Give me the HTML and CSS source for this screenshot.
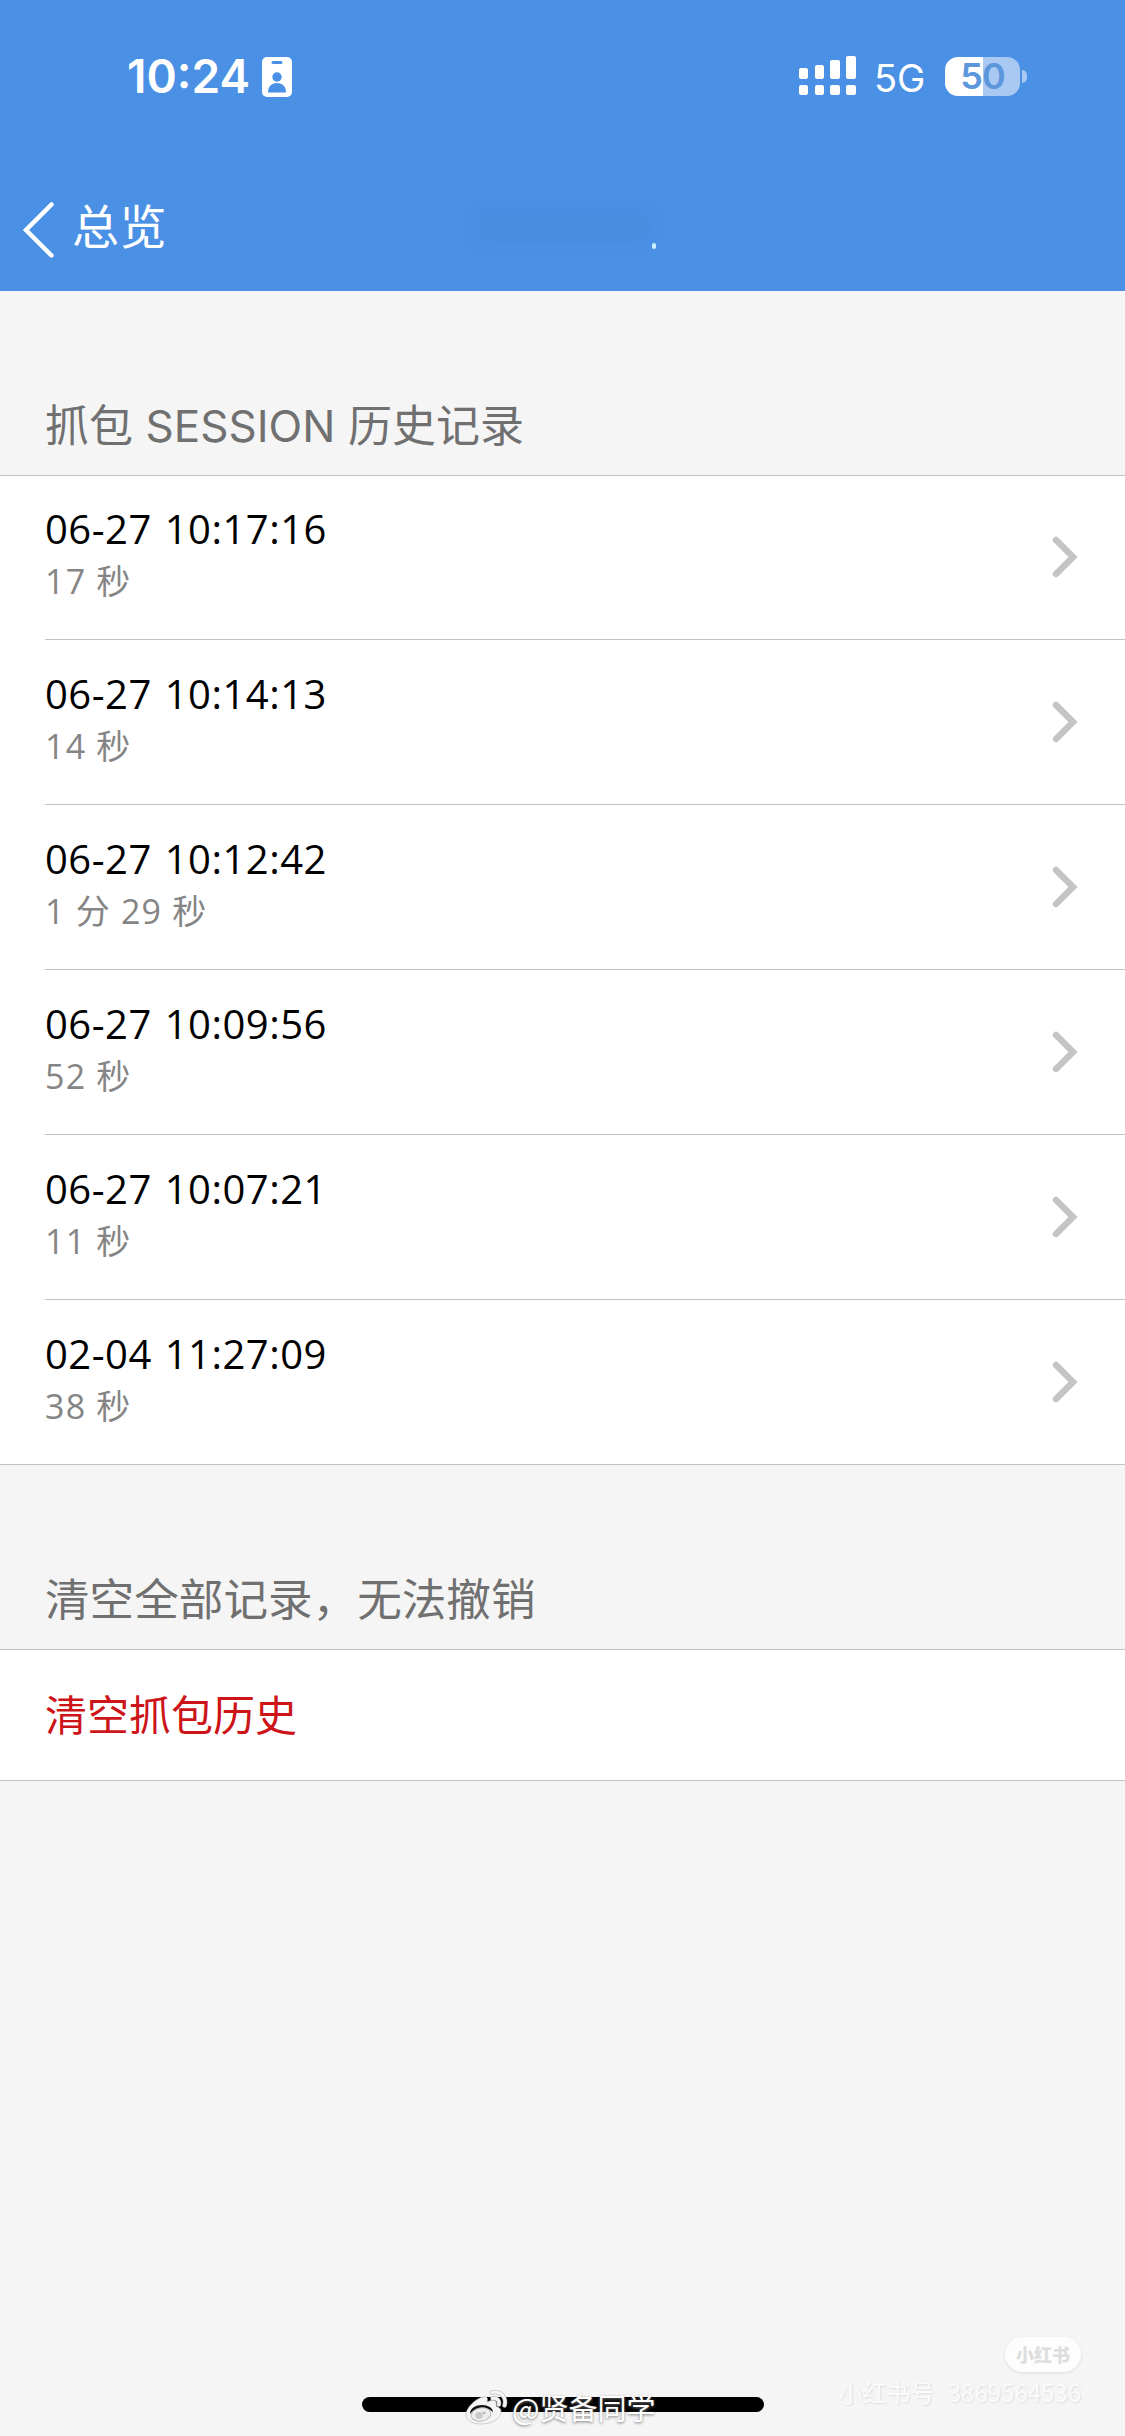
FILE: index.html
```html
<!DOCTYPE html>
<html lang="zh-CN">
<head>
<meta charset="utf-8">
<title>抓包历史</title>
<link rel="stylesheet" href="styles.css">
</head>
<body>
<div class="screen">
  <header class="top">
    <div class="status">
      <span class="time">10:24</span>
      <svg class="badge" width="30" height="40" viewBox="0 0 30 40">
        <rect width="30" height="40" rx="5" fill="#fff"/>
        <rect x="9.500" y="4" width="11" height="3" rx="1.500" fill="#4a90e5"/>
        <circle cx="15" cy="20" r="4.700" fill="#4a90e5"/>
        <path d="M6 35.500c0-6 3.500-9.500 9-9.500s9 3.500 9 9.500z" fill="#4a90e5"/>
      </svg>
      <svg class="signal" width="57" height="40" viewBox="0 0 57 40" fill="#fff">
        <rect x="0" y="12" width="9" height="11" rx="2"/><rect x="16" y="9" width="9" height="14" rx="2"/>
        <rect x="31" y="4" width="10" height="19" rx="2"/><rect x="47" y="0" width="10" height="23" rx="2"/>
        <rect x="0" y="29" width="9" height="10" rx="2"/><rect x="16" y="29" width="9" height="10" rx="2"/>
        <rect x="31" y="29" width="10" height="10" rx="2"/><rect x="47" y="29" width="10" height="10" rx="2"/>
      </svg>
      <span class="network">5G</span>
      <div class="battery"><span class="level">50</span></div>
      <span class="nub"></span>
    </div>
    <nav class="nav">
      <svg class="back" width="34" height="60" viewBox="0 0 34 60"><path d="M30.500 4.500L5 30l25.500 25.500" fill="none" stroke="#fff" stroke-width="4.500" stroke-linecap="round"/></svg>
      <span class="back-label">总览</span>
      <span class="title"></span>
      <span class="dot"></span>
    </nav>
  </header>
  <h2 class="caption mixed">抓包 SESSION 历史记录</h2>
  <ul class="list">
    <li class="row"><div><p class="date">06-27 10:17:16</p><p class="length">17 秒</p></div><svg class="more" width="26" height="42" viewBox="0 0 26 42"><path d="M4 4l17 17L4 38"/></svg></li>
    <li class="row"><div><p class="date">06-27 10:14:13</p><p class="length">14 秒</p></div><svg class="more" width="26" height="42" viewBox="0 0 26 42"><path d="M4 4l17 17L4 38"/></svg></li>
    <li class="row"><div><p class="date">06-27 10:12:42</p><p class="length">1 分 29 秒</p></div><svg class="more" width="26" height="42" viewBox="0 0 26 42"><path d="M4 4l17 17L4 38"/></svg></li>
    <li class="row"><div><p class="date">06-27 10:09:56</p><p class="length">52 秒</p></div><svg class="more" width="26" height="42" viewBox="0 0 26 42"><path d="M4 4l17 17L4 38"/></svg></li>
    <li class="row"><div><p class="date">06-27 10:07:21</p><p class="length">11 秒</p></div><svg class="more" width="26" height="42" viewBox="0 0 26 42"><path d="M4 4l17 17L4 38"/></svg></li>
    <li class="row"><div><p class="date">02-04 11:27:09</p><p class="length">38 秒</p></div><svg class="more" width="26" height="42" viewBox="0 0 26 42"><path d="M4 4l17 17L4 38"/></svg></li>
  </ul>
  <h2 class="caption">清空全部记录，无法撤销</h2>
  <div class="clear">清空抓包历史</div>
  <div class="home"></div>

  <div class="weibo">
    <svg width="43" height="36" viewBox="0 0 43 36">
      <path d="M18 8C10 10 1 19 1 26c0 5 6 9 15 9 11 0 20-6 20-12 0-4-3-5-5-6 1-4 0-8-9-4 1-4 0-6-4-5z" fill="#f5f5f5" stroke="#c4c4c4" stroke-width=".8"/>
      <path d="M5 25c0-6 6-9 12-9s11 3 11 7c-3-3-7-4-12-3.500S7 22 5 25z" fill="#111"/>
      <ellipse cx="16" cy="25.500" rx="10" ry="6.500" fill="#eee" stroke="#bbb" transform="rotate(-10 16 25.500)"/>
      <circle cx="14" cy="26.500" r="3.600" fill="#c9c9c9"/><circle cx="19" cy="24" r="1.600" fill="#bbb"/>
      <path d="M27 3.500c9-2 15 5 12.500 13M27.500 9.500c4-1 7.500 2 6.300 6" fill="none" stroke="#bbb" stroke-width="4.400" stroke-linecap="round"/>
      <path d="M27 3.500c9-2 15 5 12.500 13M27.500 9.500c4-1 7.500 2 6.300 6" fill="none" stroke="#f5f5f5" stroke-width="3" stroke-linecap="round"/>
    </svg>
    <span>@贤备同学</span>
  </div>
  <div class="red">
    <span class="pill">小红书</span>
    <span class="account">小红书号 3869564536</span>
  </div>
</div>
</body>
</html>
```
FILE: styles.css
```css
* { box-sizing: border-box; margin: 0; padding: 0; }
body { background: #f5f5f5; font-family: Inter, "Noto Sans CJK SC", sans-serif; }
.screen { position: relative; width: 1125px; height: 2436px; display: flex; flex-direction: column; background: #f5f5f5; overflow: hidden; }
.top { height: 291px; background: #4a90e5; color: #fff; flex: none; }
.status { height: 152px; display: flex; align-items: center; padding-left: 127px; }
.time { width: 135px; font-size: 46px; font-weight: 600; white-space: nowrap; }
.badge { margin-top: 2px; }
.signal { margin-left: 507px; }
.network { width: 69px; margin-left: 18px; margin-right: 2px; margin-top: 4px; font-size: 38px; white-space: nowrap; }
.battery { width: 75px; height: 39px; border-radius: 13px; background: linear-gradient(90deg, #fff 38px, #a9c9f2 38px); display: flex; align-items: center; justify-content: center; }
.level { font-size: 36px; font-weight: 600; line-height: 39px; letter-spacing: -1px; color: #5c97dc; }
.nub { width: 5px; height: 13px; margin-left: 2px; border-radius: 0 6px 6px 0; background: #a9c9f2; }
.nav { height: 139px; padding: 0 0 0 21px; display: flex; align-items: flex-start; }
.back { margin-top: 48px; }
.back-label { width: 403px; margin: 37px 0 0 17px; font: 400 47px/70px "Noto Sans CJK SC", sans-serif; letter-spacing: .5px; }
.title { width: 176px; height: 34px; margin-top: 58px; background: #4586d6; opacity: .4; filter: blur(7px); }
.dot { width: 4px; height: 6px; margin-top: 91px; margin-left: 1px; border-radius: 2px; background: #d4f4ff; }
.caption { height: 184px; padding: 102px 0 0 45px; flex: none; font: 400 44.6px/66px Inter, "Noto Sans CJK SC", sans-serif; color: #707070; white-space: nowrap; }
.mixed { font-size: 44px; word-spacing: .2px; }
.list { list-style: none; background: #fff; border-top: 1px solid #c2c2c4; border-bottom: 1px solid #c2c2c4; padding-left: 45px; flex: none; }
.row { height: 165px; display: flex; justify-content: space-between; padding: 28px 47px 0 0; border-bottom: 1px solid #c2c2c4; }
.row:first-child { height: 164px; padding-top: 27px; }
.row:last-child { border-bottom: 0; height: 164px; }
.date { font: 400 40px/52px "Open Sans", sans-serif; color: #000; white-space: nowrap; letter-spacing: .5px; word-spacing: 2px; }
.length { font: 400 34px/52px "Open Sans", "Noto Sans CJK SC", sans-serif; color: #858585; white-space: nowrap; letter-spacing: 1.2px; }
.more { margin-top: 33px; fill: none; stroke: #c4c4c4; stroke-width: 6.5; stroke-linecap: round; }
.clear { height: 132px; padding: 32px 0 0 45px; flex: none; background: #fff; border-top: 1px solid #c2c2c4; border-bottom: 1px solid #c2c2c4; font: 400 42px/62px "Noto Sans CJK SC", sans-serif; color: #cc1419; }
.home { width: 402px; height: 15px; margin: auto auto 24px 362px; border-radius: 8px; background: #000; flex: none; }
.weibo { position: absolute; left: 465px; top: 2389px; display: flex; gap: 4px; }
.weibo span { margin-top: -3px; font: 400 29px/42px "Noto Sans CJK SC", sans-serif; color: #fff; text-shadow: 0 1px 3px #777; white-space: nowrap; }
.red { position: absolute; right: 44px; top: 2337px; display: flex; flex-direction: column; align-items: flex-end; }
.pill { width: 76px; height: 35px; border-radius: 18px; background: #fdfdfd; box-shadow: 0 1px 3px #ddd; text-align: center; font: 900 18px/35px "Noto Sans CJK SC", sans-serif; color: #dedede; }
.account { margin-top: 2px; font: 400 24px/36px "Noto Sans CJK SC", sans-serif; word-spacing: 8px; color: #fbfbfb; text-shadow: 1px 1px 2px #ddd; white-space: nowrap; }
```
